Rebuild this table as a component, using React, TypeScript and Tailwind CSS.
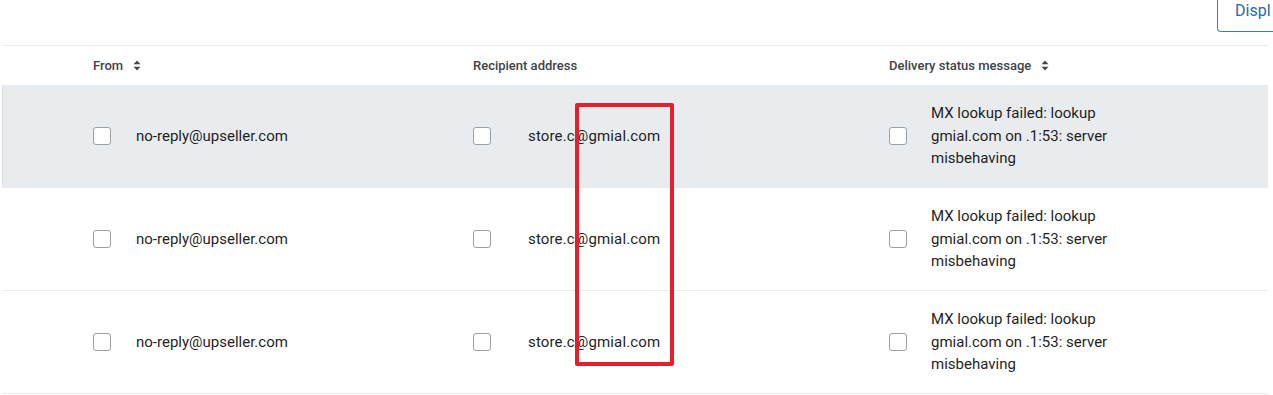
import React from "react";

type Row = { from: string; to: string; message: string };

const rows: Row[] = [
  {
    from: "no-reply@upseller.com",
    to: "store.c@gmial.com",
    message: "MX lookup failed: lookup gmial.com on .1:53: server misbehaving",
  },
  {
    from: "no-reply@upseller.com",
    to: "store.c@gmial.com",
    message: "MX lookup failed: lookup gmial.com on .1:53: server misbehaving",
  },
  {
    from: "no-reply@upseller.com",
    to: "store.c@gmial.com",
    message: "MX lookup failed: lookup gmial.com on .1:53: server misbehaving",
  },
];

const SortIcon = () => (
  <svg width="8" height="11" viewBox="0 0 8 11" className="ml-[10px] text-[#3f4650]">
    <path d="M4 0.5 L7.5 4.3 H0.5 Z" fill="currentColor" />
    <path d="M4 10.5 L7.5 6.7 H0.5 Z" fill="currentColor" />
  </svg>
);

const Checkbox = () => (
  <span className="block h-[18px] w-[18px] shrink-0 rounded-[3px] border border-[#9aa0a6] bg-white" />
);

const App = () => {
  return (
    <div
      className="relative h-[395px] w-[1273px] overflow-hidden bg-white text-[#1f1f1f]"
      style={{ fontFamily: "Roboto, 'Liberation Sans', sans-serif" }}
    >
      {/* toolbar, display button is scrolled partly out of view */}
      <div className="flex h-[45px] justify-end overflow-hidden">
        <div className="-mt-[28px] flex h-[60px] w-[70px] shrink-0 translate-x-[14px] items-end rounded-bl-[4px] border border-t-0 border-[#3f7cbf] pb-[8px] pl-[17px] text-[16px] text-[#2b68a8]">
          Displ
        </div>
      </div>

      <div className="ml-[2px] w-[1266px]">
        {/* header */}
        <div className="grid h-[40px] grid-cols-[471px_416px_1fr] items-center border-t border-[#ebebeb] text-[13px] font-medium text-[#3c434b]">
          <div className="flex items-center pl-[91px]">
            From
            <SortIcon />
          </div>
          <div className="flex items-center">Recipient address</div>
          <div className="flex items-center">
            Delivery status message
            <SortIcon />
          </div>
        </div>

        {/* rows */}
        {rows.map((row, i) => (
          <div
            key={i}
            className={`grid h-[103px] grid-cols-[471px_416px_1fr] items-center border-b border-[#ececec] text-[15px] ${
              i === 0 ? "bg-[#e9ecef] shadow-[inset_1px_0_0_#dcdfe3]" : "bg-white"
            }`}
          >
            <div className="flex items-center gap-[25px] pl-[91px]">
              <Checkbox />
              <span>{row.from}</span>
            </div>
            <div className="flex items-center gap-[37px]">
              <Checkbox />
              <span className="tracking-[0.15px]">{row.to}</span>
            </div>
            <div className="flex items-center gap-[24px]">
              <Checkbox />
              <span className="w-[185px] leading-[22.5px]">{row.message}</span>
            </div>
          </div>
        ))}
      </div>

      {/* highlight marker */}
      <div className="absolute left-[575px] top-[103px] h-[263px] w-[99px] rounded-[2px] border-4 border-[#e5202b]" />
    </div>
  );
};

export default App;
